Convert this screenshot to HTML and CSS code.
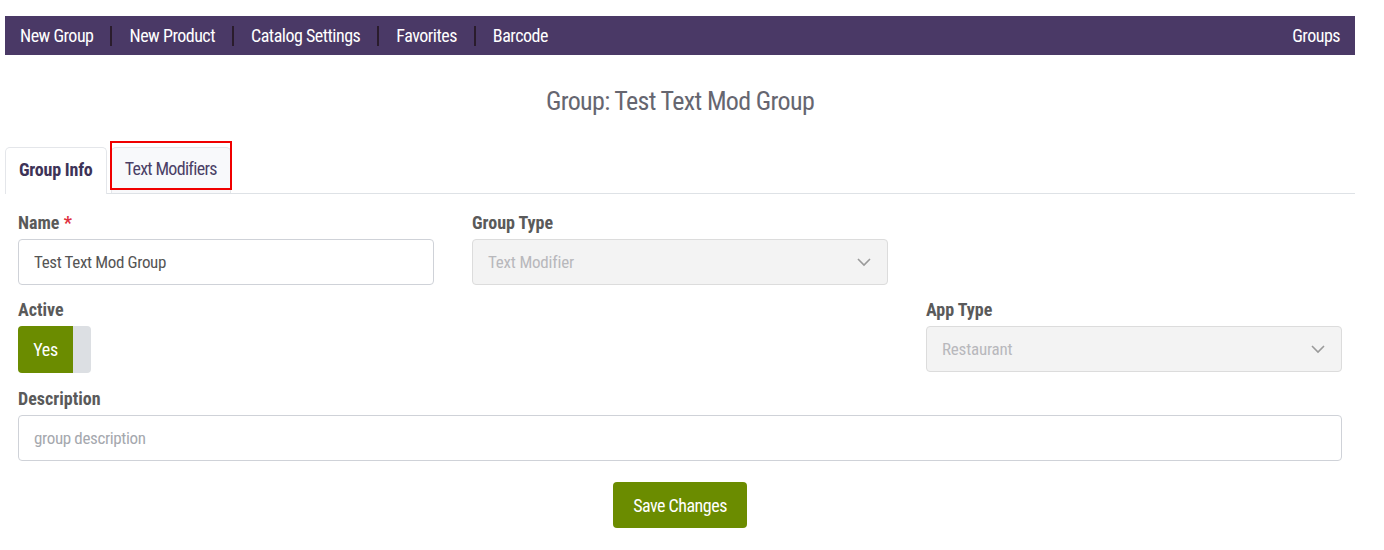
FILE: index.html
```html
<!DOCTYPE html>
<html lang="en">
<head>
    <meta charset="UTF-8">
    <meta name="viewport" content="width=device-width, initial-scale=1.0">
    <title>Group: Test Text Mod Group</title>
    <link rel="stylesheet" href="styles.css">
</head>
<body>
    <div class="page">
        <nav class="topbar">
            <div class="topbar-links">
                <a href="#">New Group</a>
                <a href="#">New Product</a>
                <a href="#">Catalog Settings</a>
                <a href="#">Favorites</a>
                <a href="#">Barcode</a>
            </div>
            <a href="#" class="topbar-right">Groups</a>
        </nav>

        <h1 class="page-title">Group: Test Text Mod Group</h1>

        <div class="tabs">
            <a href="#" class="tab active">Group Info</a>
            <a href="#" class="tab marked">Text Modifiers</a>
        </div>

        <form class="group-form">
            <div class="row">
                <div class="field">
                    <label for="name">Name <span class="req">*</span></label>
                    <input type="text" id="name" value="Test Text Mod Group">
                </div>
                <div class="field">
                    <label>Group Type</label>
                    <div class="select disabled">
                        <span>Text Modifier</span>
                        <svg width="16" height="10" viewBox="0 0 16 10"><path d="M2 2l6 6 6-6" fill="none" stroke="#9a9a9a" stroke-width="1.6"/></svg>
                    </div>
                </div>
                <div class="field"></div>
            </div>

            <div class="row">
                <div class="field">
                    <label>Active</label>
                    <div class="toggle">
                        <span class="toggle-on">Yes</span>
                        <span class="toggle-off"></span>
                    </div>
                </div>
                <div class="field"></div>
                <div class="field">
                    <label>App Type</label>
                    <div class="select disabled">
                        <span>Restaurant</span>
                        <svg width="16" height="10" viewBox="0 0 16 10"><path d="M2 2l6 6 6-6" fill="none" stroke="#9a9a9a" stroke-width="1.6"/></svg>
                    </div>
                </div>
            </div>

            <div class="field">
                <label for="desc">Description</label>
                <input type="text" id="desc" placeholder="group description">
            </div>

            <div class="actions">
                <button type="button">Save Changes</button>
            </div>
        </form>
    </div>
</body>
</html>
```

FILE: styles.css
```css
body {
    margin: 0;
    background-color: white;
    font-family: "Roboto Condensed", Roboto, "Liberation Sans", sans-serif;
    color: #555;
}
.page {
    margin: 16px 29px 0 5px;
}
.topbar {
    display: flex;
    justify-content: space-between;
    align-items: center;
    height: 39px;
    background-color: #4a3966;
    padding: 0 15px;
}
.topbar a {
    color: white;
    text-decoration: none;
    font-size: 18px;
    letter-spacing: -0.5px;
}
.topbar-links {
    display: flex;
    align-items: center;
}
.topbar-links a {
    padding: 0 17px;
    line-height: 20px;
    border-left: 2px solid #2a1c2c;
}
.topbar-links a:first-child {
    padding-left: 0;
    border-left: none;
}
.page-title {
    text-align: center;
    font-size: 26px;
    font-weight: normal;
    letter-spacing: -0.65px;
    color: #666670;
    margin: 29px 0 29px;
    line-height: 34px;
}
.tabs {
    display: flex;
    gap: 4px;
    height: 46px;
    border-bottom: 1px solid #dee2e6;
}
.tab {
    display: flex;
    align-items: center;
    padding: 0 13px 4px;
    font-size: 18px;
    letter-spacing: -0.7px;
    text-decoration: none;
    border: 1px solid #e4e6ea;
    border-bottom: none;
    border-radius: 5px 5px 0 0;
    color: #4b3f66;
    background-color: #f8f9fb;
    position: relative;
}
.tab.active {
    background-color: white;
    color: #3d3357;
    font-weight: bold;
    letter-spacing: -0.2px;
    margin-bottom: -1px;
}
.tab.marked::after {
    content: "";
    position: absolute;
    left: -2px;
    right: -2px;
    top: -7px;
    bottom: 3px;
    border: 2px solid #f00000;
}
.group-form {
    padding: 19px 13px 0;
}
.row {
    display: grid;
    grid-template-columns: 1fr 1fr 1fr;
    column-gap: 38px;
}
.field {
    margin-bottom: 15px;
}
.row + .row .field {
    margin-bottom: 16px;
}
label {
    display: block;
    font-size: 18px;
    font-weight: bold;
    color: #5a5a5a;
    margin-bottom: 6px;
    line-height: 20px;
}
.req {
    color: #e03040;
}
input {
    width: 100%;
    box-sizing: border-box;
    height: 46px;
    padding: 0 15px;
    border: 1px solid #cfd2d8;
    border-radius: 4px;
    font-family: inherit;
    font-size: 17px;
    letter-spacing: -0.35px;
    color: #555;
}
input::placeholder {
    color: #a5a8ae;
}
.select {
    display: flex;
    justify-content: space-between;
    align-items: center;
    height: 46px;
    box-sizing: border-box;
    padding: 0 15px;
    border: 1px solid #dcdcdc;
    border-radius: 4px;
    font-size: 17px;
    letter-spacing: -0.2px;
}
.select.disabled {
    background-color: #f3f3f3;
    color: #b8b8bc;
}
.toggle {
    display: flex;
    width: 73px;
    height: 47px;
    border-radius: 4px;
    overflow: hidden;
}
.toggle-on {
    width: 55px;
    background-color: #6b8c00;
    color: white;
    font-size: 18px;
    letter-spacing: -0.3px;
    display: flex;
    align-items: center;
    justify-content: center;
}
.toggle-off {
    flex: 1;
    background-color: #dcdfe3;
}
.actions {
    display: flex;
    justify-content: center;
    padding-top: 6px;
}
button {
    background-color: #6b8c00;
    color: white;
    border: none;
    border-radius: 4px;
    height: 46px;
    padding: 0 20px;
    font-family: inherit;
    font-size: 18px;
    letter-spacing: -0.5px;
    cursor: pointer;
}
```
